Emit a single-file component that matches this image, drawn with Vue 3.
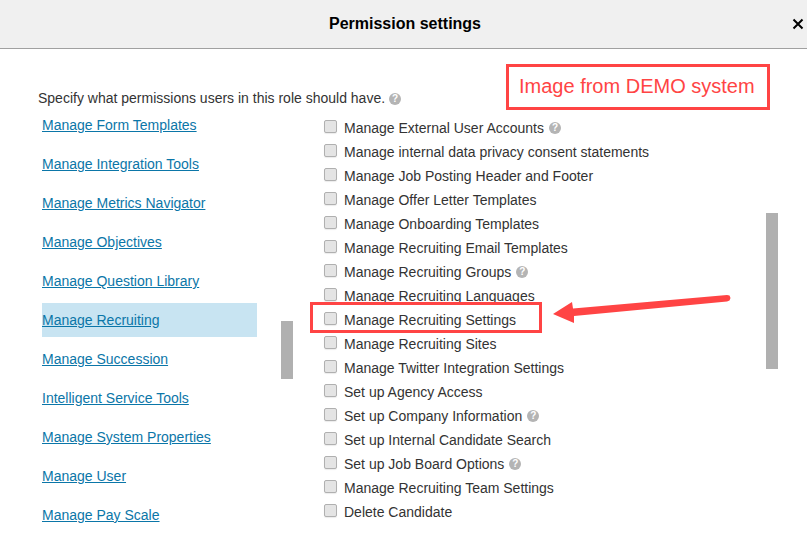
<script setup>
const links = ['Manage Form Templates','Manage Integration Tools','Manage Metrics Navigator','Manage Objectives','Manage Question Library','Manage Recruiting','Manage Succession','Intelligent Service Tools','Manage System Properties','Manage User','Manage Pay Scale']
const perms = [
  { t: 'Manage External User Accounts', h: true },
  { t: 'Manage internal data privacy consent statements' },
  { t: 'Manage Job Posting Header and Footer' },
  { t: 'Manage Offer Letter Templates' },
  { t: 'Manage Onboarding Templates' },
  { t: 'Manage Recruiting Email Templates' },
  { t: 'Manage Recruiting Groups', h: true },
  { t: 'Manage Recruiting Languages' },
  { t: 'Manage Recruiting Settings' },
  { t: 'Manage Recruiting Sites' },
  { t: 'Manage Twitter Integration Settings' },
  { t: 'Set up Agency Access' },
  { t: 'Set up Company Information', h: true },
  { t: 'Set up Internal Candidate Search' },
  { t: 'Set up Job Board Options', h: true },
  { t: 'Manage Recruiting Team Settings' },
  { t: 'Delete Candidate' },
]
</script>

<template>
  <div class="dialog">
    <header class="head">
      <h1 class="title">Permission settings</h1>
      <svg class="close" width="12" height="12" viewBox="0 0 12 12" aria-label="Close">
        <path d="M1.5 1.5 L10.5 10.5 M10.5 1.5 L1.5 10.5" stroke="#000" stroke-width="2" fill="none" />
      </svg>
    </header>
    <p class="intro">Specify what permissions users in this role should have. <span class="help help-intro">?</span></p>
    <div class="columns">
      <ul class="links">
        <li v-for="l in links" :key="l" class="link-row" :class="{ active: l === 'Manage Recruiting' }"><a href="#" class="link">{{ l }}</a></li>
      </ul>
      <ul class="perms">
        <li v-for="p in perms" :key="p.t" class="perm">
          <input type="checkbox" class="check" />
          <span>{{ p.t }}</span>
          <span v-if="p.h" class="help">?</span>
        </li>
      </ul>
    </div>
    <div class="bar bar-left"></div>
    <div class="bar bar-right"></div>
    <div class="note">Image from DEMO system</div>
    <div class="mark"></div>
    <svg class="arrow" width="807" height="548" viewBox="0 0 807 548">
      <polygon points="553,314 572,302 573,308.5 727,295 729.5,295.5 730.5,298 729.5,300.5 727,301.5 574,316 574,323" fill="#ff4444" />
    </svg>
  </div>
</template>

<style scoped>
.dialog {
  position: relative;
  width: 807px;
  height: 548px;
  overflow: hidden;
  background: #fff;
  font-family: "Liberation Sans", Arial, sans-serif;
  font-size: 14px;
  color: #333;
}
.head {
  height: 48px;
  display: flex;
  align-items: center;
  justify-content: center;
  background: #f0f0f0;
  border-bottom: 1px solid #a0a0a0;
  position: relative;
}
.title {
  margin: 0 0 0 3px;
  font-size: 16px;
  font-weight: 700;
  color: #000;
}
.close {
  position: absolute;
  left: 792px;
  top: 18px;
}
.intro {
  margin: 0;
  padding: 41px 0 0 38px;
  line-height: 17px;
  height: 18px;
}
.help {
  display: inline-flex;
  align-items: center;
  justify-content: center;
  width: 12px;
  height: 12px;
  border-radius: 50%;
  background: #b4b4b4;
  color: #fff;
  font-size: 10px;
  font-weight: 700;
  line-height: 12px;
  margin-left: 1px;
}
.help-intro {
  margin-left: 0;
  vertical-align: 1px;
}
.columns {
  display: flex;
  align-items: flex-start;
}
ul { list-style: none; margin: 0; padding: 0; }
.links {
  width: 215px;
  margin-left: 42px;
  display: flex;
  flex-direction: column;
  gap: 5px;
}
.link-row {
  height: 34px;
  display: flex;
  align-items: center;
}
.active { background: #c8e4f2; }
.link { color: #0b76a8; text-decoration: underline; }
.perms {
  margin: 8px 0 0 67px;
  display: flex;
  flex-direction: column;
}
.perm {
  height: 24px;
  display: flex;
  align-items: center;
  gap: 4px;
  white-space: nowrap;
}
.check {
  appearance: none;
  box-sizing: border-box;
  width: 13px;
  height: 13px;
  margin: -3px 3px 0 0;
  flex: none;
  background: #e4e4e4;
  border: 1px solid #b0b0b0;
  border-radius: 2px;
  box-shadow: 0 1px 1px rgba(0, 0, 0, 0.08);
}
.bar { position: absolute; background: #b0b0b0; width: 12px; }
.bar-left { left: 281px; top: 321px; height: 58px; }
.bar-right { left: 766px; top: 213px; height: 156px; }
.note {
  position: absolute;
  left: 506px;
  top: 64px;
  box-sizing: border-box;
  width: 264px;
  height: 46px;
  border: 3px solid #ff4444;
  color: #ff4444;
  font-size: 20px;
  line-height: 38px;
  padding-left: 10px;
}
.mark {
  position: absolute;
  left: 310px;
  top: 302px;
  box-sizing: border-box;
  width: 232px;
  height: 31px;
  border: 3px solid #ff4444;
}
.arrow { position: absolute; left: 0; top: 0; pointer-events: none; }
</style>
